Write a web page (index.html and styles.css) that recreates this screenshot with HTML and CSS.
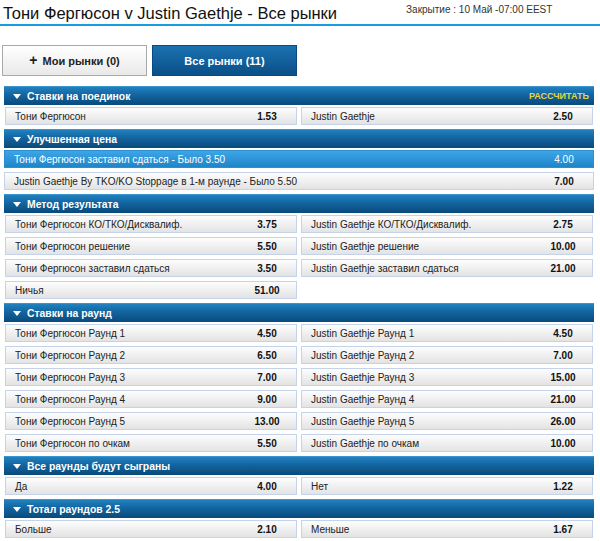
FILE: index.html
```html
<!DOCTYPE html>
<html lang="ru">
<head>
<meta charset="utf-8">
<title>Тони Фергюсон v Justin Gaethje - Все рынки</title>
<link rel="stylesheet" href="styles.css">
</head>
<body>
<header class="event-head">
  <h1 class="event-title">Тони Фергюсон v Justin Gaethje - Все рынки</h1>
  <span class="close-time">Закрытие : 10 Май -07:00 EEST</span>
</header>

<nav class="tabs">
  <button class="tab"><span class="plus">+</span> Мои рынки (0)</button>
  <button class="tab tab-active">Все рынки (11)</button>
</nav>

<main class="markets">
  <section class="market">
    <div class="market-head"><span class="caret"></span><span class="market-name">Ставки на поединок</span><span class="calc">РАССЧИТАТЬ</span></div>
    <div class="sels">
      <div class="sel"><span class="name">Тони Фергюсон</span><span class="odds">1.53</span></div>
      <div class="sel"><span class="name">Justin Gaethje</span><span class="odds">2.50</span></div>
    </div>
  </section>

  <section class="market">
    <div class="market-head"><span class="caret"></span><span class="market-name">Улучшенная цена</span></div>
    <div class="sels sels-single">
      <div class="sel sel-hot"><span class="name">Тони Фергюсон заставил сдаться - Было 3.50</span><span class="odds">4.00</span></div>
      <div class="sel"><span class="name">Justin Gaethje By TKO/KO Stoppage в 1-м раунде - Было 5.50</span><span class="odds">7.00</span></div>
    </div>
  </section>

  <section class="market">
    <div class="market-head"><span class="caret"></span><span class="market-name">Метод результата</span></div>
    <div class="sels">
      <div class="sel"><span class="name">Тони Фергюсон КО/ТКО/Дисквалиф.</span><span class="odds">3.75</span></div>
      <div class="sel"><span class="name">Justin Gaethje КО/ТКО/Дисквалиф.</span><span class="odds">2.75</span></div>
      <div class="sel"><span class="name">Тони Фергюсон решение</span><span class="odds">5.50</span></div>
      <div class="sel"><span class="name">Justin Gaethje решение</span><span class="odds">10.00</span></div>
      <div class="sel"><span class="name">Тони Фергюсон заставил сдаться</span><span class="odds">3.50</span></div>
      <div class="sel"><span class="name">Justin Gaethje заставил сдаться</span><span class="odds">21.00</span></div>
      <div class="sel"><span class="name">Ничья</span><span class="odds">51.00</span></div>
    </div>
  </section>

  <section class="market">
    <div class="market-head"><span class="caret"></span><span class="market-name">Ставки на раунд</span></div>
    <div class="sels">
      <div class="sel"><span class="name">Тони Фергюсон Раунд 1</span><span class="odds">4.50</span></div>
      <div class="sel"><span class="name">Justin Gaethje Раунд 1</span><span class="odds">4.50</span></div>
      <div class="sel"><span class="name">Тони Фергюсон Раунд 2</span><span class="odds">6.50</span></div>
      <div class="sel"><span class="name">Justin Gaethje Раунд 2</span><span class="odds">7.00</span></div>
      <div class="sel"><span class="name">Тони Фергюсон Раунд 3</span><span class="odds">7.00</span></div>
      <div class="sel"><span class="name">Justin Gaethje Раунд 3</span><span class="odds">15.00</span></div>
      <div class="sel"><span class="name">Тони Фергюсон Раунд 4</span><span class="odds">9.00</span></div>
      <div class="sel"><span class="name">Justin Gaethje Раунд 4</span><span class="odds">21.00</span></div>
      <div class="sel"><span class="name">Тони Фергюсон Раунд 5</span><span class="odds">13.00</span></div>
      <div class="sel"><span class="name">Justin Gaethje Раунд 5</span><span class="odds">26.00</span></div>
      <div class="sel"><span class="name">Тони Фергюсон по очкам</span><span class="odds">5.50</span></div>
      <div class="sel"><span class="name">Justin Gaethje по очкам</span><span class="odds">10.00</span></div>
    </div>
  </section>

  <section class="market">
    <div class="market-head"><span class="caret"></span><span class="market-name">Все раунды будут сыграны</span></div>
    <div class="sels">
      <div class="sel"><span class="name">Да</span><span class="odds">4.00</span></div>
      <div class="sel"><span class="name">Нет</span><span class="odds">1.22</span></div>
    </div>
  </section>

  <section class="market">
    <div class="market-head"><span class="caret"></span><span class="market-name">Тотал раундов 2.5</span></div>
    <div class="sels">
      <div class="sel"><span class="name">Больше</span><span class="odds">2.10</span></div>
      <div class="sel"><span class="name">Меньше</span><span class="odds">1.67</span></div>
    </div>
  </section>
</main>
</body>
</html>
```

FILE: styles.css
```css
* {
  box-sizing: border-box;
}

body {
  margin: 0;
  background: #ffffff;
  font-family: "Liberation Sans", Arial, sans-serif;
  color: #222222;
}

/* Event title bar with the blue rule underneath */
.event-head {
  display: flex;
  align-items: flex-start;
  height: 26px;
  padding: 2px 0 0 3px;
  border-bottom: 2px solid #1a9ce0;
}

.event-title {
  margin: 0;
  font-size: 16.5px;
  font-weight: normal;
  line-height: 22px;
  color: #111111;
  white-space: nowrap;
}

.close-time {
  margin-left: 69px;
  padding-top: 2px;
  font-size: 10px;
  line-height: 12px;
  color: #333333;
}

/* Market filter tabs */
.tabs {
  display: flex;
  gap: 5px;
  padding: 19px 0 0 2px;
}

.tab {
  width: 145px;
  height: 31px;
  font-family: inherit;
  font-size: 11px;
  font-weight: bold;
  color: #222222;
  background: linear-gradient(#ffffff, #e9e9e9);
  border: 1px solid #a9a9a9;
  border-radius: 0;
  padding: 0;
}

.tab .plus {
  font-size: 14px;
  line-height: 11px;
  margin-right: 2px;
}

.tab-active {
  color: #ffffff;
  background: linear-gradient(#1a72b0, #0a4f88);
  border-color: #0b4a7e;
}

/* Markets list */
.markets {
  padding: 10px 6px 0 4px;
}

.market-head {
  display: flex;
  align-items: center;
  height: 19px;
  padding: 0 5px 0 9px;
  background: linear-gradient(#2181bf 0%, #12649f 45%, #094a7b 100%);
  border-top: 1px solid #3b94cc;
  color: #ffffff;
  font-size: 10.4px;
  font-weight: bold;
  margin-bottom: 2px;
}

.caret {
  width: 0;
  height: 0;
  border-left: 4px solid transparent;
  border-right: 4px solid transparent;
  border-top: 5px solid #ffffff;
  margin-right: 6px;
}

.market-name {
  flex: 1;
}

.calc {
  color: #e5d544;
  font-size: 9px;
}

.sels {
  display: grid;
  grid-template-columns: 1fr 1fr;
  gap: 4px;
  padding: 0 1px 4px;
}

.sels-single {
  grid-template-columns: 1fr;
  padding: 0 0 4px;
}

.sel {
  display: flex;
  align-items: center;
  height: 18px;
  padding: 0 0 0 9px;
  background: linear-gradient(#fdfdfd, #e3e3e3);
  border: 1px solid #c4d3ea;
  font-size: 10px;
  color: #222222;
}

.name {
  flex: 1;
  white-space: nowrap;
}

.odds {
  width: 46px;
  margin-right: 6px;
  text-align: center;
  font-weight: bold;
  color: #111111;
}

.sel-hot {
  background: linear-gradient(#3ea5e6, #1d86ca);
  border-color: #2a90d2;
  color: #ffffff;
}

.sel-hot .odds {
  color: #ffffff;
  font-weight: normal;
}
```
